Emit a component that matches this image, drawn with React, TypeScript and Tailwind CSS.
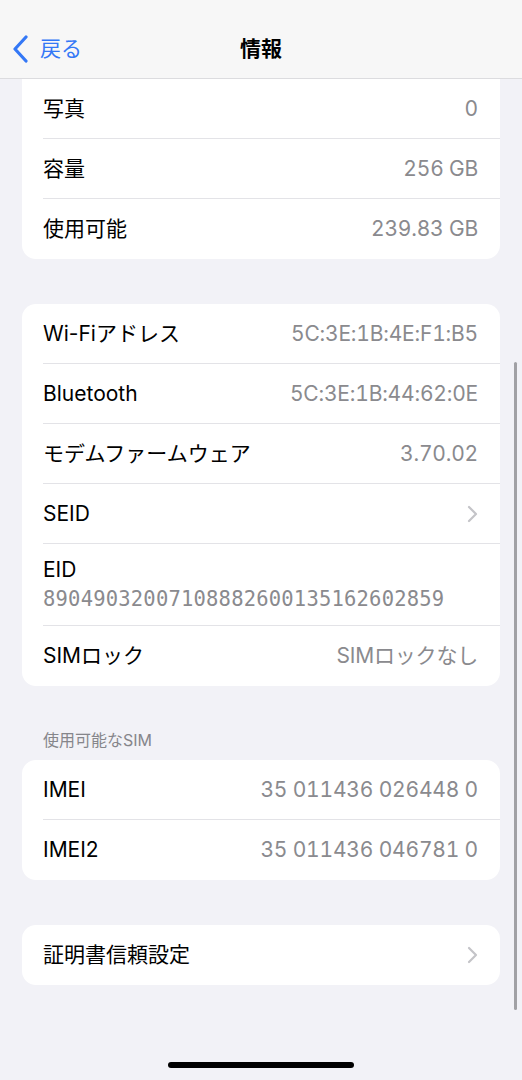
import React from "react";

type Row = {
  label: string;
  value?: string;
  chevron?: boolean;
};

const FONT = 'font-["Inter","Noto_Sans_CJK_JP",sans-serif]';

function Chevron() {
  return (
    <svg width="11" height="18" viewBox="0 0 11 18" fill="none">
      <path
        d="M2 2l7 7-7 7"
        stroke="#c4c4c8"
        strokeWidth="2.2"
        strokeLinecap="round"
        strokeLinejoin="round"
      />
    </svg>
  );
}

function SettingsRow({ row, last }: { row: Row; last: boolean }) {
  return (
    <div className="pl-[21px]">
      <div
        className={`flex h-[60px] items-center justify-between pr-[22px] ${
          last ? "" : "border-b border-[#e3e3e7]"
        }`}
      >
        <span className="text-[21px] text-black">{row.label}</span>
        {row.value && (
          <span className="text-[21px] tracking-[-0.2px] text-[#8a8a8e] tabular-nums">
            {row.value}
          </span>
        )}
        {row.chevron && <Chevron />}
      </div>
    </div>
  );
}

function Card({
  rows,
  className = "",
  children,
}: {
  rows?: Row[];
  className?: string;
  children?: React.ReactNode;
}) {
  return (
    <div className={`mx-[22px] bg-white ${className}`}>
      {rows?.map((r, i) => (
        <SettingsRow key={r.label} row={r} last={i === rows.length - 1} />
      ))}
      {children}
    </div>
  );
}

export default function App() {
  return (
    <div
      className={`relative h-[1080px] w-[522px] overflow-hidden bg-[#f2f2f7] ${FONT}`}
    >
      {/* nav bar */}
      <div className="relative flex h-[79px] items-center border-b border-[#dcdcdf] bg-[#f7f7f7] pt-[20px]">
        <div className="flex items-center pl-[12px] text-[#3478f6]">
          <svg width="18" height="28" viewBox="0 0 18 28" fill="none">
            <path
              d="M14 2L3 14l11 12"
              stroke="#3478f6"
              strokeWidth="3.2"
              strokeLinecap="round"
              strokeLinejoin="round"
            />
          </svg>
          <span className="ml-[10px] text-[21px]">戻る</span>
        </div>
        <div className="absolute left-0 right-0 top-[19px] flex h-[59px] items-center justify-center">
          <span className="text-[21px] font-bold text-black">情報</span>
        </div>
      </div>

      {/* storage card (scrolled, top hidden) */}
      <Card
        className="rounded-b-[14px]"
        rows={[
          { label: "写真", value: "0" },
          { label: "容量", value: "256 GB" },
          { label: "使用可能", value: "239.83 GB" },
        ]}
      />

      {/* network card */}
      <Card className="mt-[45px] rounded-[14px]">
        {[
          { label: "Wi-Fiアドレス", value: "5C:3E:1B:4E:F1:B5" },
          { label: "Bluetooth", value: "5C:3E:1B:44:62:0E" },
          { label: "モデムファームウェア", value: "3.70.02" },
          { label: "SEID", chevron: true },
        ].map((r) => (
          <SettingsRow key={r.label} row={r} last={false} />
        ))}
        <div className="pl-[21px]">
          <div className="flex h-[82px] flex-col justify-center border-b border-[#e3e3e7] pr-[22px]">
            <span className="text-[21px] leading-[28px] text-black">EID</span>
            <span className="font-['DejaVu_Sans_Mono',monospace] text-[20.5px] leading-[30px] tracking-[0.2px] text-[#8a8a8e]">
              89049032007108882600135162602859
            </span>
          </div>
        </div>
        <SettingsRow row={{ label: "SIMロック", value: "SIMロックなし" }} last />
      </Card>

      {/* SIM section */}
      <div className="px-[43px] pb-[10px] pt-[44px] text-[16px] leading-[20px] text-[#86868b]">
        使用可能なSIM
      </div>
      <Card
        className="rounded-[14px]"
        rows={[
          { label: "IMEI", value: "35 011436 026448 0" },
          { label: "IMEI2", value: "35 011436 046781 0" },
        ]}
      />

      <Card
        className="mt-[45px] rounded-[14px]"
        rows={[{ label: "証明書信頼設定", chevron: true }]}
      />

      {/* scroll indicator */}
      <div className="absolute left-[514px] top-[362px] h-[648px] w-[3px] rounded-full bg-[#a1a1a5]" />

      {/* home indicator */}
      <div className="absolute bottom-[12px] left-[168px] h-[6px] w-[186px] rounded-full bg-black" />
    </div>
  );
}
